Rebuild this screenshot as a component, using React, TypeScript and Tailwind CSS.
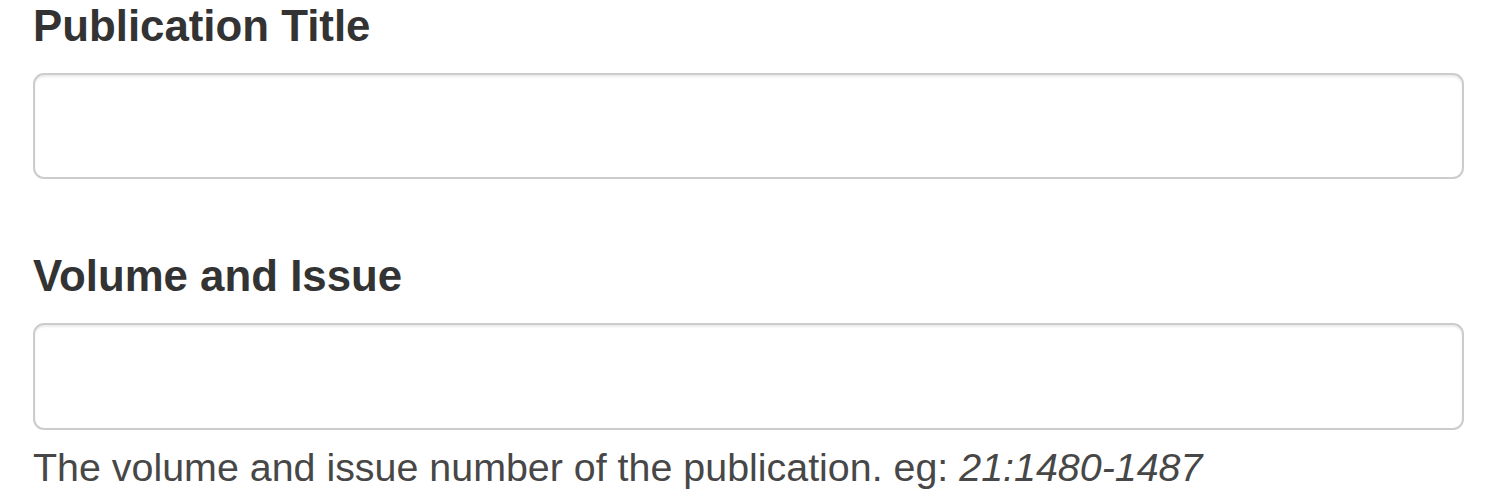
import React from "react";

export default function App() {
  return (
    <div className="w-[1500px] h-[500px] bg-white overflow-hidden" style={{ fontFamily: '"Liberation Sans", Arial, sans-serif' }}>
      <div className="pl-[33px] pr-[36px] pt-[1.5px]">
        <label className="block text-[43.8px] leading-[48px] font-bold text-[#333333]">Publication Title</label>
        <input
          type="text"
          className="block mt-[23.5px] w-full h-[106px] rounded-[11px] border-[2.5px] border-[#cccccc] bg-white shadow-[inset_0_2px_2px_rgba(0,0,0,0.08)] outline-none"
        />
        <label className="block mt-[72.7px] text-[43.8px] leading-[48px] font-bold text-[#333333]">Volume and Issue</label>
        <input
          type="text"
          className="block mt-[23.8px] w-full h-[106.5px] rounded-[11px] border-[2.5px] border-[#cccccc] bg-white shadow-[inset_0_2px_2px_rgba(0,0,0,0.08)] outline-none"
        />
        <p className="mt-[15.1px] text-[39.4px] leading-[44px] text-[#474747] whitespace-nowrap">
          The volume and issue number of the publication. eg: <em className="italic">21:1480-1487</em>
        </p>
      </div>
    </div>
  );
}
